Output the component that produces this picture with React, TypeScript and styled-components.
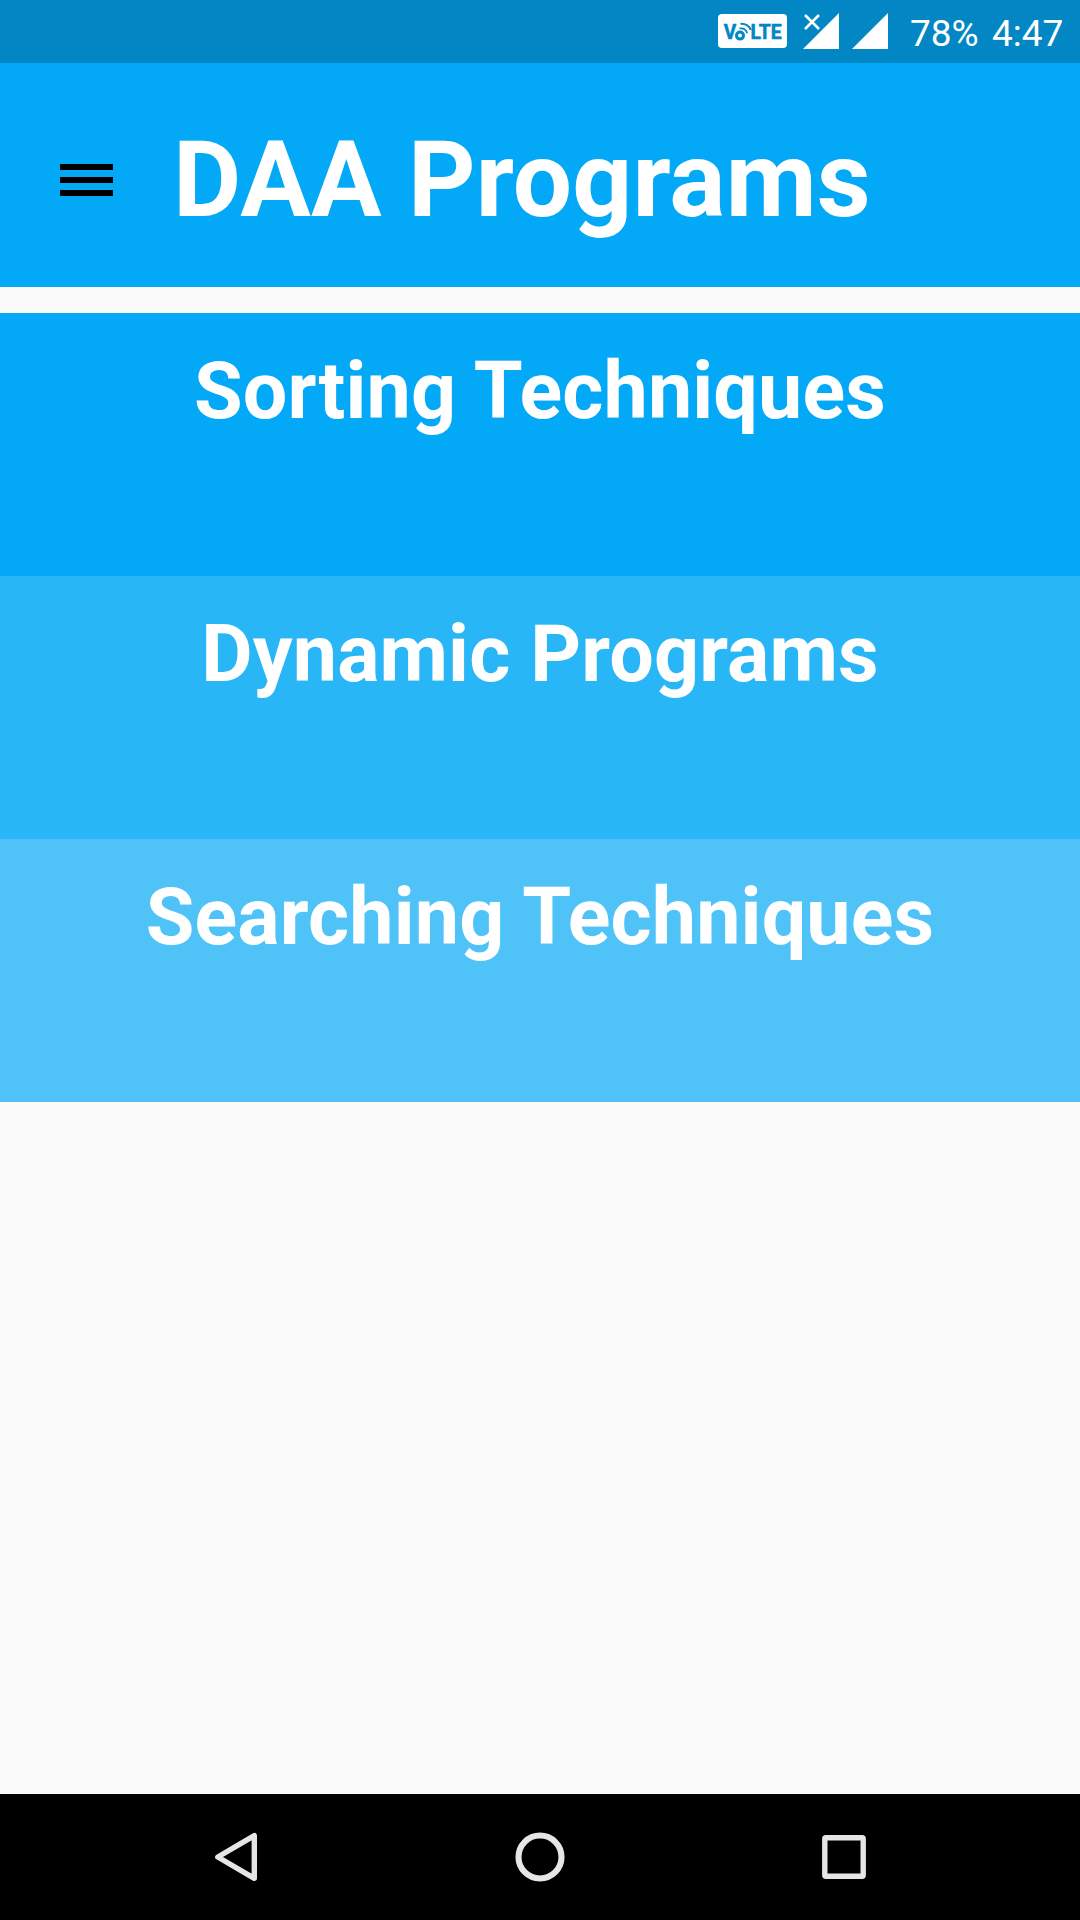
import React from "react";
import styled, { createGlobalStyle } from "styled-components";

const GlobalStyle = createGlobalStyle`
  body { margin: 0; background: #fafafa; }
  * { box-sizing: border-box; }
`;

const Screen = styled.div`
  display: flex;
  flex-direction: column;
  width: 1080px;
  height: 1920px;
  background: #fafafa;
  color: #fff;
  font-family: Roboto, "Liberation Sans", sans-serif;
  overflow: hidden;
`;

const StatusBar = styled.div`
  display: flex;
  justify-content: flex-end;
  align-items: flex-start;
  height: 63px;
  padding: 13px 16px 0 0;
  background: #0286c4;
`;

const StatusIcon = styled.svg<{ $gap: number }>`
  display: block;
  flex: none;
  margin-right: ${(p) => p.$gap}px;
`;

const StatusText = styled.span<{ $width: number }>`
  width: ${(p) => p.$width}px;
  padding-top: 1px;
  font-size: 37px;
  line-height: 40px;
  white-space: nowrap;
`;

const AppBar = styled.header`
  display: flex;
  align-items: flex-start;
  height: 224px;
  padding-left: 60px;
  background: #03a9f6;
`;

const MenuButton = styled.button`
  display: flex;
  flex-direction: column;
  gap: 7px;
  width: 53px;
  margin: 101px 60px 0 0;
  padding: 0;
  border: 0;
  background: none;
`;

const MenuLine = styled.span`
  height: 6px;
  background: #000;
`;

const Title = styled.h1`
  margin: 56px 0 0;
  font-size: 105px;
  line-height: 124px;
  letter-spacing: 0.16px;
  font-weight: 700;
  white-space: nowrap;
`;

const List = styled.main`
  flex: 1;
  padding-top: 26px;
`;

const Category = styled.div<{ $color: string }>`
  height: 263px;
  padding-top: 32px;
  background: ${(p) => p.$color};
  text-align: center;
  font-size: 79px;
  line-height: 92px;
  letter-spacing: 0.14px;
  font-weight: 700;
  white-space: nowrap;
`;

const NavBar = styled.nav`
  display: flex;
  justify-content: center;
  gap: 244px;
  height: 126px;
  padding-top: 33px;
  background: #000;
`;

const NavIcon = styled.svg`
  display: block;
  width: 60px;
  height: 60px;
  fill: none;
  stroke: #e6e6e6;
  stroke-linejoin: round;
`;

const categories = [
  { name: "Sorting Techniques", color: "#03a9f6" },
  { name: "Dynamic Programs", color: "#29b6f7" },
  { name: "Searching Techniques", color: "#4fc2f8" },
];

export default function App() {
  return (
    <Screen>
      <GlobalStyle />
      <StatusBar>
        <StatusIcon $gap={16} width="69" height="36" viewBox="0 0 69 36">
          <rect x="0" y="1" width="69" height="34" rx="4" fill="#fff" />
          <g fill="#0286c4" stroke="#0286c4" strokeWidth="0.5" fontFamily="Roboto, sans-serif" fontWeight="700" fontSize="20">
            <text x="5.8" y="26.3" textLength="12.5" lengthAdjust="spacingAndGlyphs">V</text>
            <text x="32.5" y="26.3" textLength="31.3" lengthAdjust="spacingAndGlyphs">LTE</text>
          </g>
          <g fill="none" stroke="#0286c4">
            <circle cx="22" cy="22.6" r="3.5" strokeWidth="3" />
            <path d="M21.5 15.4Q27.8 14.6 29.2 20.3" strokeWidth="1.8" />
            <path d="M22.5 10.8Q30.5 10.6 32.7 17" strokeWidth="2" />
          </g>
        </StatusIcon>
        <StatusIcon $gap={13} width="36" height="36" viewBox="0 0 36 36">
          <path d="M0 36L36 0V36Z" fill="#fff" />
          <path d="M2 2L16 16M16 2L2 16" stroke="#fff" strokeWidth="2.6" />
        </StatusIcon>
        <StatusIcon $gap={22} width="36" height="36" viewBox="0 0 36 36">
          <path d="M0 36L36 0V36Z" fill="#fff" />
        </StatusIcon>
        <StatusText $width={82}>78%</StatusText>
        <StatusText $width={72}>4:47</StatusText>
      </StatusBar>
      <AppBar>
        <MenuButton aria-label="Menu">
          <MenuLine />
          <MenuLine />
          <MenuLine />
        </MenuButton>
        <Title>DAA Programs</Title>
      </AppBar>
      <List>
        {categories.map((c) => (
          <Category key={c.name} $color={c.color}>
            {c.name}
          </Category>
        ))}
      </List>
      <NavBar>
        <NavIcon viewBox="0 0 60 60">
          <path d="M11.8 30L48.3 8.7V51.3Z" strokeWidth="5.4" />
        </NavIcon>
        <NavIcon viewBox="0 0 60 60">
          <circle cx="30" cy="30" r="21.5" strokeWidth="6.1" />
        </NavIcon>
        <NavIcon viewBox="0 0 60 60">
          <rect x="10.8" y="10.8" width="38.4" height="38.4" rx="1" strokeWidth="5.4" />
        </NavIcon>
      </NavBar>
    </Screen>
  );
}
